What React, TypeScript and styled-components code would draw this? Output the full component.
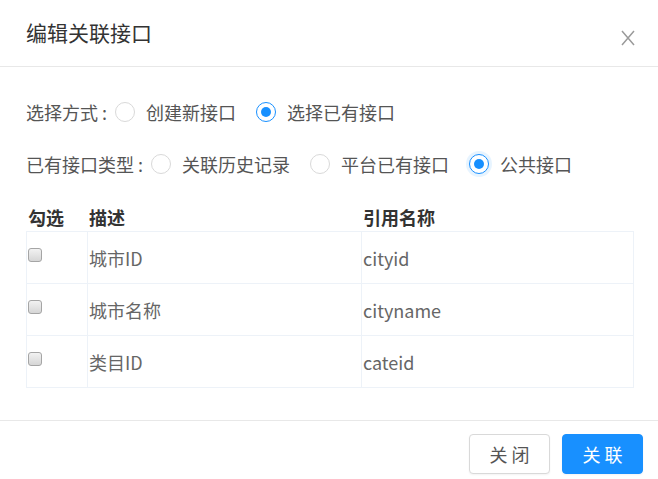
import styled, { createGlobalStyle, css } from "styled-components";

const GlobalStyle = createGlobalStyle`
  html, body {
    margin: 0;
    padding: 0;
    background: #fff;
  }
  body {
    font-family: "Noto Sans CJK SC", "Noto Sans", sans-serif;
    color: #555;
  }
`;

const rows = [
  { desc: "城市ID", name: "cityid" },
  { desc: "城市名称", name: "cityname" },
  { desc: "类目ID", name: "cateid" },
];

function App() {
  return (
    <StModal>
      <GlobalStyle />
      <StHeader>
        <StTitle>编辑关联接口</StTitle>
        <StClose aria-label="close">
          <svg width="14" height="16" viewBox="0 0 14 16">
            <path d="M1 1 L13 15 M13 1 L1 15" stroke="#9a9a9a" strokeWidth="1.5" fill="none" />
          </svg>
        </StClose>
      </StHeader>

      <StBody>
        <StFormRow>
          <StLabel>选择方式 :</StLabel>
          <StOption>
            <StRadio />
            创建新接口
          </StOption>
          <StOption>
            <StRadio $checked />
            选择已有接口
          </StOption>
        </StFormRow>
        <StFormRow>
          <StLabel>已有接口类型 :</StLabel>
          <StOption>
            <StRadio />
            关联历史记录
          </StOption>
          <StOption>
            <StRadio />
            平台已有接口
          </StOption>
          <StOption>
            <StRadio $checked $focused />
            公共接口
          </StOption>
        </StFormRow>

        <StTableHead>
          <span>勾选</span>
          <span>描述</span>
          <span>引用名称</span>
        </StTableHead>
        <StTable>
          {rows.map((r) => (
            <StRow key={r.name}>
              <StCell>
                <StCheckbox />
              </StCell>
              <StCell>{r.desc}</StCell>
              <StCell>{r.name}</StCell>
            </StRow>
          ))}
        </StTable>
      </StBody>

      <StFooter>
        <StButton>关 闭</StButton>
        <StButton $primary>关 联</StButton>
      </StFooter>
    </StModal>
  );
}

export default App;

const StModal = styled.div`
  width: 658px;
  height: 479px;
  display: flex;
  flex-direction: column;
  background: #fff;
  overflow: hidden;
`;

const StHeader = styled.div`
  height: 67px;
  border-bottom: 1px solid #e8e8e8;
  display: flex;
  align-items: center;
  justify-content: space-between;
  padding: 0 20px 0 26px;
  box-sizing: border-box;
`;

const StTitle = styled.div`
  font-size: 21px;
  color: #333;
  margin-top: -2px;
`;

const StClose = styled.div`
  display: flex;
  margin-top: 9px;
  margin-right: 3px;
`;

const StBody = styled.div`
  flex: 1;
  padding: 30px 24px 0 26px;
`;

const StFormRow = styled.div`
  display: flex;
  align-items: center;
  height: 30px;
  font-size: 18px;
  color: #555;
  margin-bottom: 22px;
`;

const StLabel = styled.span`
  margin-right: 8px;
  white-space: nowrap;
`;

const StOption = styled.label`
  display: flex;
  align-items: center;
  gap: 11px;
  margin-right: 20px;
  white-space: nowrap;
`;

const StRadio = styled.span<{ $checked?: boolean; $focused?: boolean }>`
  position: relative;
  width: 20px;
  height: 20px;
  box-sizing: border-box;
  border-radius: 50%;
  border: 1px solid #d9d9d9;
  background: #fff;
  ${({ $checked }) =>
    $checked &&
    css`
      border-color: #1890ff;
      &::after {
        content: "";
        position: absolute;
        left: 4px;
        top: 4px;
        width: 10px;
        height: 10px;
        border-radius: 50%;
        background: #1890ff;
      }
    `}
  ${({ $focused }) =>
    $focused &&
    css`
      box-shadow: 0 0 0 3px rgba(24, 144, 255, 0.1);
    `}
`;

const StTableHead = styled.div`
  display: grid;
  grid-template-columns: 61px 274px 1fr;
  height: 28px;
  align-items: center;
  margin-top: 24px;
  font-size: 18px;
  font-weight: bold;
  color: #333;
  & > span {
    padding-left: 2px;
  }
`;

const StTable = styled.div`
  border: 1px solid #edf2f8;
  border-bottom: none;
`;

const StRow = styled.div`
  display: grid;
  grid-template-columns: 60px 274px 1fr;
  height: 52px;
  border-bottom: 1px solid #edf2f8;
  box-sizing: border-box;
  font-size: 18px;
  color: #666;
`;

const StCell = styled.div`
  display: flex;
  align-items: center;
  padding-left: 1px;
  & + & {
    border-left: 1px solid #edf2f8;
  }
`;

const StCheckbox = styled.span`
  width: 14px;
  height: 14px;
  box-sizing: border-box;
  border: 1px solid #a5a5a5;
  border-radius: 3px;
  background: linear-gradient(#f2f2f2, #d6d6d6);
  margin-top: -5px;
`;

const StFooter = styled.div`
  height: 59px;
  border-top: 1px solid #e8e8e8;
  display: flex;
  justify-content: flex-end;
  align-items: flex-start;
  gap: 12px;
  padding: 13px 15px 0 0;
  box-sizing: border-box;
`;

const StButton = styled.button<{ $primary?: boolean }>`
  width: 81px;
  height: 40px;
  border-radius: 4px;
  font-family: "Noto Sans CJK SC", sans-serif;
  font-size: 18px;
  border: 1px solid ${({ $primary }) => ($primary ? "#1890ff" : "#d9d9d9")};
  background: ${({ $primary }) => ($primary ? "#1890ff" : "#fff")};
  color: ${({ $primary }) => ($primary ? "#fff" : "#555")};
  box-shadow: 0 1px 2px rgba(0, 0, 0, 0.05);
  padding: 0;
`;
